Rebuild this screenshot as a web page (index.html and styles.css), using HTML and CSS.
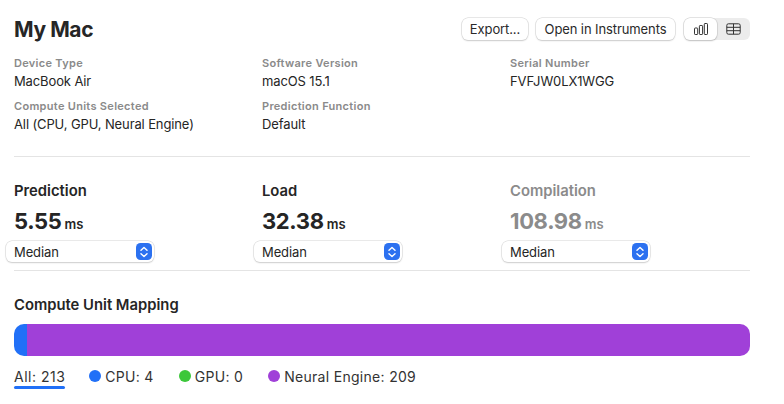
FILE: index.html
```html
<!DOCTYPE html>
<html lang="en">
<head>
<meta charset="utf-8">
<title>My Mac</title>
<link rel="stylesheet" href="styles.css">
</head>
<body>
<header class="header">
  <h1 class="title">My Mac</h1>
  <div class="actions">
    <button class="btn btn-export">Export...</button>
    <button class="btn btn-open">Open in Instruments</button>
    <div class="segmented">
      <div class="seg seg-on">
        <svg width="14" height="12" viewBox="0 0 14 12" fill="none" stroke="#333" stroke-width="1"><rect x=".5" y="5" width="3.2" height="6.5" rx=".7"/><rect x="5.4" y="2.5" width="3.2" height="9" rx=".7"/><rect x="10.3" y=".5" width="3.2" height="11" rx=".7"/></svg>
      </div>
      <div class="seg">
        <svg width="15" height="12" viewBox="0 0 15 12" fill="none" stroke="#333" stroke-width="1"><rect x=".8" y=".8" width="13.4" height="10.4" rx="1.6"/><path d="M.8 4.3h13.4M.8 7.7h13.4M7.5 .8v10.4"/></svg>
      </div>
    </div>
  </div>
</header>
<section class="info">
  <div class="field"><div class="label">Device Type</div><div class="value">MacBook Air</div></div>
  <div class="field"><div class="label">Software Version</div><div class="value">macOS 15.1</div></div>
  <div class="field"><div class="label">Serial Number</div><div class="value">FVFJW0LX1WGG</div></div>
  <div class="field"><div class="label">Compute Units Selected</div><div class="value">All (CPU, GPU, Neural Engine)</div></div>
  <div class="field"><div class="label">Prediction Function</div><div class="value">Default</div></div>
</section>
<hr class="rule rule-top">
<section class="metrics">
  <div class="metric">
    <div class="metric-name">Prediction</div>
    <div class="metric-value">5.55<span class="unit">ms</span></div>
    <div class="select"><span>Median</span><span class="stepper"><svg width="10" height="14" viewBox="0 0 10 14" fill="none" stroke="#fff" stroke-width="1.4" stroke-linecap="round" stroke-linejoin="round"><path d="M2 5.2 5 2.4l3 2.8M2 8.8l3 2.8 3-2.8"/></svg></span></div>
  </div>
  <div class="metric">
    <div class="metric-name">Load</div>
    <div class="metric-value">32.38<span class="unit">ms</span></div>
    <div class="select"><span>Median</span><span class="stepper"><svg width="10" height="14" viewBox="0 0 10 14" fill="none" stroke="#fff" stroke-width="1.4" stroke-linecap="round" stroke-linejoin="round"><path d="M2 5.2 5 2.4l3 2.8M2 8.8l3 2.8 3-2.8"/></svg></span></div>
  </div>
  <div class="metric metric-dim">
    <div class="metric-name">Compilation</div>
    <div class="metric-value">108.98<span class="unit">ms</span></div>
    <div class="select"><span>Median</span><span class="stepper"><svg width="10" height="14" viewBox="0 0 10 14" fill="none" stroke="#fff" stroke-width="1.4" stroke-linecap="round" stroke-linejoin="round"><path d="M2 5.2 5 2.4l3 2.8M2 8.8l3 2.8 3-2.8"/></svg></span></div>
  </div>
</section>
<hr class="rule rule-mid">
<section class="mapping">
  <h2 class="mapping-title">Compute Unit Mapping</h2>
  <div class="bar"><div class="bar-cpu"></div><div class="bar-ne"></div></div>
  <div class="legend">
    <div class="legend-item legend-all">All: 213</div>
    <div class="legend-item"><span class="dot dot-cpu"></span>CPU: 4</div>
    <div class="legend-item"><span class="dot dot-gpu"></span>GPU: 0</div>
    <div class="legend-item"><span class="dot dot-ne"></span>Neural Engine: 209</div>
  </div>
</section>
</body>
</html>
```
FILE: styles.css
```css
* { box-sizing: border-box; }
html, body { margin: 0; height: 100%; overflow: hidden; }
body {
  width: 784px;
  height: 404px;
  background: #fff;
  padding: 0 34px 0 14px;
  font-family: Inter, "Liberation Sans", sans-serif;
  color: #252525;
  font-size: 13px;
}
.header { display: flex; justify-content: space-between; align-items: center; height: 44px; padding-top: 14px; }
.title { margin: 0; font-size: 21px; font-weight: 700; letter-spacing: -0.4px; color: #262626; }
.actions { display: flex; align-items: center; }
.btn {
  height: 22px; padding: 0; border: 0; background: #fff; border-radius: 6px;
  font: 13px Inter, "Liberation Sans", sans-serif; letter-spacing: -0.1px; color: #2a2a2a;
  box-shadow: 0 0 0 .5px #d0d0d0, 0 1px 1.5px rgba(0,0,0,.2);
}
.btn-export { width: 66px; margin-right: 8px; }
.btn-open { width: 139px; margin-right: 9px; }
.segmented { display: flex; width: 66px; height: 22px; background: #ececec; border-radius: 6px; }
.seg { width: 33px; display: flex; align-items: center; justify-content: center; border-radius: 6px; }
.seg-on { background: #fff; box-shadow: 0 0 0 .5px #c8c8c8, 0 1px 1.5px rgba(0,0,0,.25); }
.info { display: grid; grid-template-columns: repeat(3, 248px); row-gap: 10px; margin-top: 12px; }
.label { font-size: 11px; font-weight: 600; letter-spacing: 0.3px; color: #8a8a8a; line-height: 14px; }
.value { font-size: 13px; letter-spacing: -0.12px; line-height: 16px; margin-top: 3px; }
.rule { border: 0; height: 1px; background: #e4e4e4; margin: 0; }
.rule-top { margin-top: 24px; }
.metrics { display: grid; grid-template-columns: repeat(3, 248px); margin-top: 25px; }
.metric-name { font-size: 14.8px; font-weight: 600; line-height: 18px; }
.metric-value { font-size: 22px; font-weight: 700; letter-spacing: -0.35px; line-height: 26px; margin-top: 8px; }
.unit { font-size: 13px; font-weight: 600; letter-spacing: 0; margin-left: 3px; }
.metric-dim .metric-name, .metric-dim .metric-value { color: #8b8b8b; }
.select {
  display: flex; justify-content: space-between; align-items: center;
  width: 148px; height: 21px; margin: 4px 0 0 -8px; padding: 0 2px 0 8px;
  letter-spacing: -0.1px;
  background: #fff; border-radius: 6px;
  box-shadow: 0 0 0 .5px #d4d4d4, 0 1px 1.5px rgba(0,0,0,.2);
}
.stepper { width: 16px; height: 17px; border-radius: 4.5px; background: #2c71f0; display: flex; align-items: center; justify-content: center; }
.rule-mid { margin-top: 8px; }
.mapping-title { margin: 0; padding-top: 25px; font-size: 14.8px; font-weight: 600; line-height: 18px; }
.bar { display: flex; height: 32px; margin-top: 10px; border-radius: 10px; overflow: hidden; }
.bar-cpu { width: 13px; background: #2170f7; }
.bar-ne { flex: 1; background: #a040d8; }
.legend { display: flex; margin-top: 11px; font-size: 14px; letter-spacing: 0.3px; color: #333; }
.legend-item { display: flex; align-items: center; height: 18px; margin-right: 25px; }
.legend-all { position: relative; margin-right: 24px; letter-spacing: 0.5px; }
.legend-all::after { content: ""; position: absolute; left: 0; right: 0; bottom: -4px; height: 3px; border-radius: 2px; background: #2170f7; }
.dot { width: 12px; height: 12px; border-radius: 50%; margin-right: 4px; }
.dot-cpu { background: #2170f7; }
.dot-gpu { background: #3cc73a; }
.dot-ne { background: #a040d8; }
```
